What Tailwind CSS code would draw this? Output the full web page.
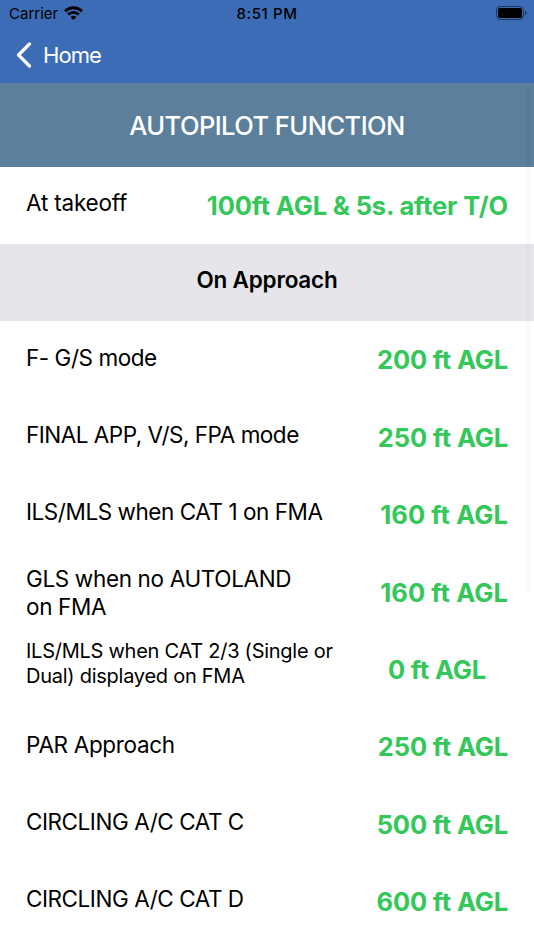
<!DOCTYPE html>
<html lang="en">
  <head>
    <meta charset="UTF-8" />
    <meta name="viewport" content="width=device-width, initial-scale=1.0" />
    <script src="https://cdn.jsdelivr.net/npm/@tailwindcss/browser@4"></script>
    <title>Autopilot Function</title>
  </head>
  <body class="relative h-[950px] overflow-hidden bg-white font-[Inter,sans-serif] text-black">
    <!-- status bar + nav -->
    <header class="h-[83px] bg-[#3b6cb5]">
      <div class="flex h-7 items-center pl-[9px] pr-[7px] text-[15px]">
        <div class="flex flex-1 items-center gap-[6px]">
          <span>Carrier</span>
          <svg class="mb-0.5 h-[14px] w-[19px]" viewBox="0 0 19 14" fill="none" stroke="black" stroke-width="2.8">
            <path d="M1 5.2a12.2 12.2 0 0 1 17 0" />
            <path d="M4.1 8.6a7.8 7.8 0 0 1 10.8 0" />
            <path d="M9.5 14L6.6 11.1a4.1 4.1 0 0 1 5.8 0z" fill="black" stroke="none" />
          </svg>
        </div>
        <span class="pr-0.5 font-medium tracking-[0.6px]">8:51 PM</span>
        <div class="flex flex-1 justify-end">
          <svg class="mb-0.5 h-[14px] w-[31px]" viewBox="0 0 31 14">
            <rect x=".5" y=".5" width="27" height="13" rx="3.8" fill="none" stroke="black" stroke-opacity=".5" />
            <rect x="2" y="2" width="24" height="10" rx="2" />
            <path d="M29 4.8v4.4c1-.4 1.6-1.2 1.6-2.2s-.6-1.8-1.6-2.2z" fill-opacity=".5" />
          </svg>
        </div>
      </div>
      <a class="flex h-[54px] items-center gap-[11px] pl-4 text-[22px] text-white">
        <svg class="h-[26px] w-4" viewBox="0 0 16 26" fill="none" stroke="white" stroke-width="3.2" stroke-linecap="round" stroke-linejoin="round">
          <path d="M13.5 2L2.5 13l11 11" />
        </svg>
        <span class="tracking-[-0.9px]">Home</span>
      </a>
    </header>

    <h1 class="flex h-[83.5px] items-center justify-center bg-[#5c7f9b] pt-0.5 text-[25.5px] font-medium tracking-[-0.55px] text-white">AUTOPILOT FUNCTION</h1>

    <main class="text-[22.5px] tracking-[-0.45px]">
      <div class="flex h-[77.5px] items-center justify-between px-[26px]">
        <span class="pb-1 tracking-[-0.2px]">At takeoff</span>
        <span class="pt-0.5 text-[25.5px] font-bold tracking-[-0.15px] text-[#34c759]">100ft AGL &amp; 5s. after T/O</span>
      </div>
      <h2 class="flex h-[77.4px] items-center justify-center bg-[#e5e5ea] pb-1.5 font-semibold tracking-[-0.2px]">On Approach</h2>
      <div class="flex h-[77.4px] items-center justify-between px-[26px]">
        <span class="pb-1">F- G/S mode</span>
        <span class="text-[25.5px] font-bold tracking-[-0.15px] text-[#34c759]">200 ft AGL</span>
      </div>
      <div class="flex h-[77.4px] items-center justify-between px-[26px]">
        <span class="pb-1.5 tracking-[-0.5px]">FINAL APP, V/S, FPA mode</span>
        <span class="pt-px text-[25.5px] font-bold tracking-[-0.15px] text-[#34c759]">250 ft AGL</span>
      </div>
      <div class="flex h-[77.4px] items-center justify-between px-[26px]">
        <span class="pb-1.5">ILS/MLS when CAT 1 on FMA</span>
        <span class="text-[25.5px] font-bold tracking-[0.1px] text-[#34c759]">160 ft AGL</span>
      </div>
      <div class="flex h-[77.4px] items-center justify-between px-[26px]">
        <span class="pt-px leading-[27.5px] tracking-[-0.35px]">GLS when no AUTOLAND<br />on FMA</span>
        <span class="pt-px text-[25.5px] font-bold tracking-[0.1px] text-[#34c759]">160 ft AGL</span>
      </div>
      <div class="flex h-[77.4px] items-center justify-between pl-[26px] pr-[48px]">
        <span class="pb-3 text-[20px] leading-[24.5px] tracking-[-0.26px]">ILS/MLS when CAT 2/3 (Single or<br />Dual) displayed on FMA</span>
        <span class="text-[25.5px] font-bold tracking-[-0.15px] text-[#34c759]">0 ft AGL</span>
      </div>
      <div class="flex h-[77.4px] items-center justify-between px-[26px]">
        <span class="pb-1 tracking-[-0.33px]">PAR Approach</span>
        <span class="pt-px text-[25.5px] font-bold tracking-[-0.15px] text-[#34c759]">250 ft AGL</span>
      </div>
      <div class="flex h-[77.4px] items-center justify-between px-[26px]">
        <span class="pb-1.5">CIRCLING A/C CAT C</span>
        <span class="pt-px text-[25.5px] font-bold tracking-[-0.15px] text-[#34c759]">500 ft AGL</span>
      </div>
      <div class="flex h-[77.4px] items-center justify-between px-[26px]">
        <span class="pb-1.5">CIRCLING A/C CAT D</span>
        <span class="text-[25.5px] font-bold tracking-[-0.15px] text-[#34c759]">600 ft AGL</span>
      </div>
    </main>

    <!-- scroll indicator -->
    <div class="absolute right-1 top-[85px] h-[508px] w-[4px] bg-black/2"></div>
  </body>
</html>
